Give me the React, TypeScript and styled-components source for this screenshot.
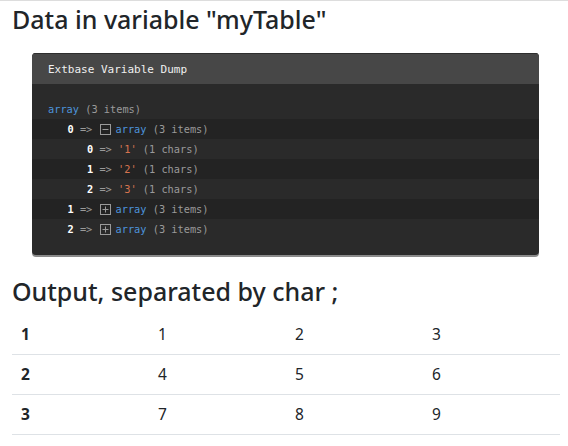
import React from "react";
import styled, { createGlobalStyle } from "styled-components";

const Global = createGlobalStyle`
  html, body { margin: 0; padding: 0; background: #fff; }
  body { font-family: "Noto Sans", "Open Sans", sans-serif; color: #212529; }
`;

const Page = styled.div`
  border-top: 1px solid #dddddd;
  padding: 3px 8px 0 12px;
`;

const Heading = styled.h3`
  margin: 0;
  font-size: 25px;
  font-weight: 500;
  line-height: 30px;
  color: #212529;
`;

const Dump = styled.div`
  margin: 19px 21px 21px 20px;
  background: #2a2a2a;
  border-radius: 4px;
  box-shadow: 0 2px 0 #8a8a8a;
  overflow: hidden;
  font-family: "DejaVu Sans Mono", monospace;
`;

const DumpHeader = styled.div`
  height: 31px;
  background: #474747;
  border-top: 1px solid #2e2e2e;
  box-sizing: border-box;
  padding-left: 16px;
  display: flex;
  align-items: center;
  font-size: 11px;
  color: #f0f0f0;
`;

const DumpBody = styled.div`
  padding: 15px 0 16px;
  font-size: 10.3px;
  line-height: 20px;
  color: #9a9a9a;
`;

const Row = styled.div<{ $level: number; $dark?: boolean }>`
  display: flex;
  align-items: center;
  height: 20px;
  white-space: pre;
  padding-left: ${(p) => 16 + p.$level * 19.5}px;
  background: ${(p) => (p.$dark ? "#232323" : "transparent")};
`;

const Key = styled.span`
  color: #ffffff;
  font-weight: bold;
`;

const Type = styled.span`
  color: #4d94dc;
`;

const Str = styled.span`
  color: #d6744f;
`;

const Toggle = styled.span`
  display: inline-block;
  width: 11px;
  height: 11px;
  margin: 0 5px 0 1px;
  svg { display: block; }
`;

const ToggleIcon = ({ open }: { open: boolean }) => (
  <Toggle>
    <svg width="11" height="11" viewBox="0 0 11 11">
      <rect x="0.5" y="0.5" width="10" height="10" fill="none" stroke="#9a9a9a" />
      <line x1="2.5" y1="5.5" x2="8.5" y2="5.5" stroke="#9a9a9a" />
      {!open && <line x1="5.5" y1="2.5" x2="5.5" y2="8.5" stroke="#9a9a9a" />}
    </svg>
  </Toggle>
);

const Table = styled.table`
  width: 548px;
  margin-top: 9px;
  border-collapse: collapse;
  table-layout: fixed;
  font-size: 15.5px;
`;

const Td = styled.td<{ $head?: boolean }>`
  padding: 8px 9px;
  line-height: 23px;
  border-bottom: 1px solid #dee2e6;
  font-weight: ${(p) => (p.$head ? 700 : 400)};
  color: #212529;
`;

const rows = [
  ["1", "1", "2", "3"],
  ["2", "4", "5", "6"],
  ["3", "7", "8", "9"],
];

export default function App() {
  return (
    <>
      <Global />
      <Page>
        <Heading>Data in variable "myTable"</Heading>
        <Dump>
          <DumpHeader>Extbase Variable Dump</DumpHeader>
          <DumpBody>
            <Row $level={0}>
              <Type>array</Type> (3 items)
            </Row>
            <Row $level={1} $dark>
              <Key>0</Key> =&gt; <ToggleIcon open />
              <Type>array</Type> (3 items)
            </Row>
            <Row $level={2}>
              <Key>0</Key> =&gt; <Str>'1'</Str> (1 chars)
            </Row>
            <Row $level={2} $dark>
              <Key>1</Key> =&gt; <Str>'2'</Str> (1 chars)
            </Row>
            <Row $level={2}>
              <Key>2</Key> =&gt; <Str>'3'</Str> (1 chars)
            </Row>
            <Row $level={1} $dark>
              <Key>1</Key> =&gt; <ToggleIcon open={false} />
              <Type>array</Type> (3 items)
            </Row>
            <Row $level={1}>
              <Key>2</Key> =&gt; <ToggleIcon open={false} />
              <Type>array</Type> (3 items)
            </Row>
          </DumpBody>
        </Dump>
        <Heading>Output, separated by char ;</Heading>
        <Table>
          <tbody>
            {rows.map((r) => (
              <tr key={r[0]}>
                {r.map((c, i) => (
                  <Td key={i} $head={i === 0}>
                    {c}
                  </Td>
                ))}
              </tr>
            ))}
          </tbody>
        </Table>
      </Page>
    </>
  );
}
